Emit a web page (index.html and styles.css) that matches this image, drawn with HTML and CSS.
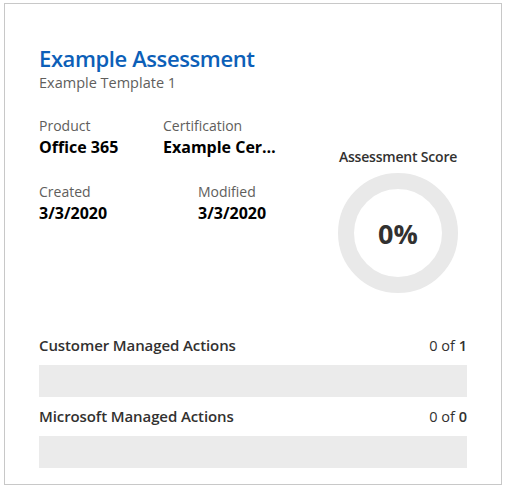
FILE: index.html
```html
<!DOCTYPE html>
<html>
<head>
<meta charset="utf-8">
<link rel="stylesheet" href="styles.css">
</head>
<body>
<div class="card">
  <div class="header">
    <div class="title">Example Assessment</div>
    <div class="subtitle">Example Template 1</div>
  </div>
  <div class="middle">
    <div class="details">
      <div class="row row-top">
        <div class="field f-product">
          <div class="label">Product</div>
          <div class="value">Office 365</div>
        </div>
        <div class="field f-cert">
          <div class="label">Certification</div>
          <div class="value ellipsis">Example Cer…</div>
        </div>
      </div>
      <div class="row row-bottom">
        <div class="field f-created">
          <div class="label">Created</div>
          <div class="value">3/3/2020</div>
        </div>
        <div class="field f-modified">
          <div class="label">Modified</div>
          <div class="value">3/3/2020</div>
        </div>
      </div>
    </div>
    <div class="score">
      <div class="score-label">Assessment Score</div>
      <div class="donut">
        <svg width="120" height="120" viewBox="0 0 120 120">
          <circle cx="60" cy="60" r="52" fill="none" stroke="#e9e9e9" stroke-width="16"/>
        </svg>
        <div class="donut-text">0%</div>
      </div>
    </div>
  </div>
  <div class="actions">
    <div class="action">
      <div class="action-head">
        <span class="action-name">Customer Managed Actions</span>
        <span class="action-count">0 of <b>1</b></span>
      </div>
      <div class="bar"></div>
    </div>
    <div class="action">
      <div class="action-head">
        <span class="action-name">Microsoft Managed Actions</span>
        <span class="action-count">0 of <b>0</b></span>
      </div>
      <div class="bar"></div>
    </div>
  </div>
</div>
</body>
</html>
```
FILE: styles.css
```css
html, body {
  margin: 0;
  padding: 0;
  background: #ffffff;
}
body {
  font-family: "Open Sans", "Noto Sans", sans-serif;
  color: #323130;
}
.card {
  box-sizing: border-box;
  margin: 3px 0 0 4px;
  width: 498px;
  height: 482px;
  border: 1px solid #c8c8c8;
  padding: 40px 34px 0 34px;
  display: flex;
  flex-direction: column;
}
.title {
  font-size: 22px;
  font-weight: 600;
  color: #0c5fb8;
  line-height: 28px;
  letter-spacing: -0.4px;
}
.subtitle {
  font-size: 14.5px;
  color: #605e5c;
  line-height: 20px;
  margin-top: 1px;
}
.middle {
  display: flex;
  justify-content: space-between;
  margin-top: 23px;
}
.details {
  display: flex;
  flex-direction: column;
  gap: 24px;
}
.row {
  display: flex;
}
.label {
  font-size: 14px;
  color: #605e5c;
  line-height: 20px;
}
.value {
  font-size: 16px;
  font-weight: 700;
  color: #000000;
  line-height: 22px;
}
.f-product { width: 124px; }
.f-cert { width: 112px; }
.f-created { width: 159px; }
.ellipsis {
  white-space: nowrap;
}
.score {
  display: flex;
  flex-direction: column;
  align-items: center;
  width: 124px;
  margin-top: 31px;
  margin-right: 7px;
}
.score-label {
  font-size: 14px;
  font-weight: 600;
  line-height: 20px;
  color: #323130;
  letter-spacing: -0.2px;
}
.donut {
  position: relative;
  width: 120px;
  height: 120px;
  margin-top: 6px;
}
.donut svg { display: block; }
.donut-text {
  position: absolute;
  inset: 0;
  display: flex;
  align-items: center;
  justify-content: center;
  font-size: 27px;
  font-weight: 700;
  color: #323130;
}
.actions {
  margin-top: 42px;
  display: flex;
  flex-direction: column;
  gap: 9px;
}
.action-head {
  display: flex;
  justify-content: space-between;
  align-items: baseline;
  line-height: 20px;
  margin-bottom: 9px;
}
.action-name {
  font-size: 15px;
  font-weight: 600;
  color: #323130;
  letter-spacing: -0.1px;
}
.action-count {
  font-size: 14.5px;
  color: #323130;
}
.action-count b { font-weight: 600; }
.bar {
  height: 32px;
  background: #ebebeb;
}
```
